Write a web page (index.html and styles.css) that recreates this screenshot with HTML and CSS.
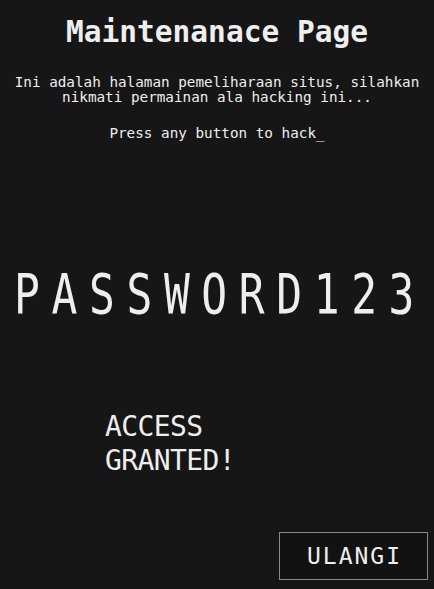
FILE: index.html
```html
<!DOCTYPE html>
<html lang="id">
<head>
<meta charset="utf-8">
<title>Maintenance</title>
<link rel="stylesheet" href="styles.css">
</head>
<body>
<main class="page">
  <h1 class="title">Maintenanace Page</h1>
  <p class="intro">Ini adalah halaman pemeliharaan situs, silahkan nikmati permainan ala hacking ini...</p>
  <p class="prompt">Press any button to hack_</p>
  <div class="password"><span class="password-text">PASSWORD123</span></div>
  <div class="status">ACCESS<br>GRANTED!</div>
  <div class="actions"><button class="btn">ULANGI</button></div>
</main>
</body>
</html>
```
FILE: styles.css
```css
html, body {
  margin: 0;
  padding: 0;
  background: #161616;
}
body {
  color: #eeeeee;
  font-family: "DejaVu Sans Mono", monospace;
  width: 434px;
  height: 589px;
  overflow: hidden;
}
.page {
  display: flex;
  flex-direction: column;
  text-align: center;
}
.title {
  font-size: 29.5px;
  font-weight: bold;
  line-height: 36px;
  margin: 14px 0 0;
}
.intro {
  font-size: 14.3px;
  line-height: 15px;
  margin: 25px 0 0;
}
.prompt {
  font-size: 14.3px;
  line-height: 15px;
  margin: 21px 0 0;
}
.password {
  display: flex;
  justify-content: center;
  font-size: 55px;
  line-height: 60px;
  margin: 123px 0 0;
  padding-left: 6px;
}
.password-text {
  display: inline-block;
  letter-spacing: 14.9px;
  transform: scaleX(0.78);
  white-space: nowrap;
}
.status {
  text-align: left;
  font-size: 28px;
  line-height: 34px;
  letter-spacing: -0.6px;
  padding-left: 105px;
  margin: 86px 0 0;
}
.actions {
  display: flex;
  justify-content: flex-end;
  padding-right: 6px;
  margin-top: 54px;
}
.btn {
  width: 149px;
  height: 48px;
  background: #121212;
  border: 1px solid #8a8a8a;
  color: #eeeeee;
  font-family: "DejaVu Sans Mono", monospace;
  font-size: 23px;
  letter-spacing: 2px;
  padding: 0 0 0 2px;
}
```
